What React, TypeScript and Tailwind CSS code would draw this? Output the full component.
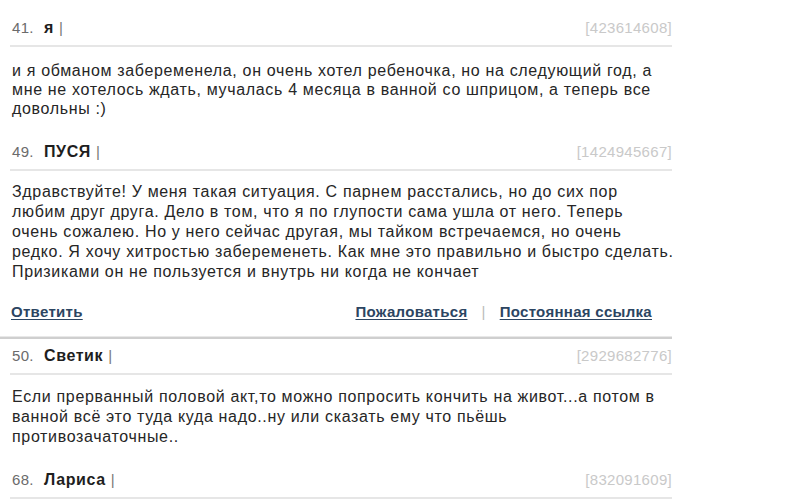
import React from "react";

const font = { fontFamily: '"Liberation Sans", Arial, sans-serif' };

function Header({ num, name, id }: { num: string; name: string; id: string }) {
  return (
    <div className="flex items-center justify-between border-b-2 border-[#e6e6e6] pb-[7px] ml-[10px] w-[662px]">
      <div className="flex items-center h-[20px] leading-[20px]">
        <span className="text-[#6b6b6b] text-[15px] w-[34px] pl-[2px] tracking-[0.3px]">{num}</span>
        <span className="font-bold text-[#1e1e1e] text-[16px] tracking-[0.6px]">{name}</span>
        <span className="text-[#777] text-[15px] ml-[5px]">|</span>
      </div>
      <span className="text-[#c9c9c9] text-[15px] leading-[20px] tracking-[0.3px]">{id}</span>
    </div>
  );
}

export default function App() {
  return (
    <div className="w-[800px] h-[503px] bg-white overflow-hidden text-[16px]" style={font}>
      <div className="pt-[18px]">
        <Header num="41." name="я" id="[423614608]" />
        <p className="ml-[12px] w-[662px] mt-[14px] leading-[19px] tracking-[0.66px] text-[#262626]">
          и я обманом забеременела, он очень хотел ребеночка, но на следующий год, а мне не хотелось ждать, мучалась 4 месяца в ванной со шприцом, а теперь все довольны :)
        </p>
      </div>
      <div className="pt-[24px]">
        <Header num="49." name="ПУСЯ" id="[1424945667]" />
        <p className="ml-[12px] w-[662px] mt-[11px] leading-[20px] tracking-[0.66px] text-[#262626]">
          Здравствуйте! У меня такая ситуация. С парнем расстались, но до сих пор любим друг друга. Дело в том, что я по глупости сама ушла от него. Теперь очень сожалею. Но у него сейчас другая, мы тайком встречаемся, но очень редко. Я хочу хитростью забеременеть. Как мне это правильно и быстро сделать. Призиками он не пользуется и внутрь ни когда не кончает
        </p>
        <div className="flex items-center justify-between ml-[10px] w-[642px] mt-[20px] h-[20px] leading-[20px] text-[15px] font-bold text-[#2c4562] tracking-[0.3px]">
          <a className="underline decoration-[#2c4562] underline-offset-2 pl-[1px]">Ответить</a>
          <div className="flex items-center">
            <a className="underline underline-offset-2">Пожаловаться</a>
            <span className="text-[#bbb] font-normal mx-[14px]">|</span>
            <a className="underline underline-offset-2">Постоянная ссылка</a>
          </div>
        </div>
        <div className="mt-[14px] w-[672px] h-[3px] bg-[#cfcfcf] border-t border-[#e8e8e8]" />
      </div>
      <div className="pt-[7px]">
        <Header num="50." name="Светик" id="[2929682776]" />
        <p className="ml-[12px] w-[662px] mt-[12px] leading-[20px] tracking-[0.66px] text-[#262626]">
          Если прерванный половой акт,то можно попросить кончить на живот...а потом в ванной всё это туда куда надо..ну или сказать ему что пьёшь противозачаточные..
        </p>
      </div>
      <div className="pt-[23px]">
        <Header num="68." name="Лариса" id="[832091609]" />
      </div>
    </div>
  );
}
